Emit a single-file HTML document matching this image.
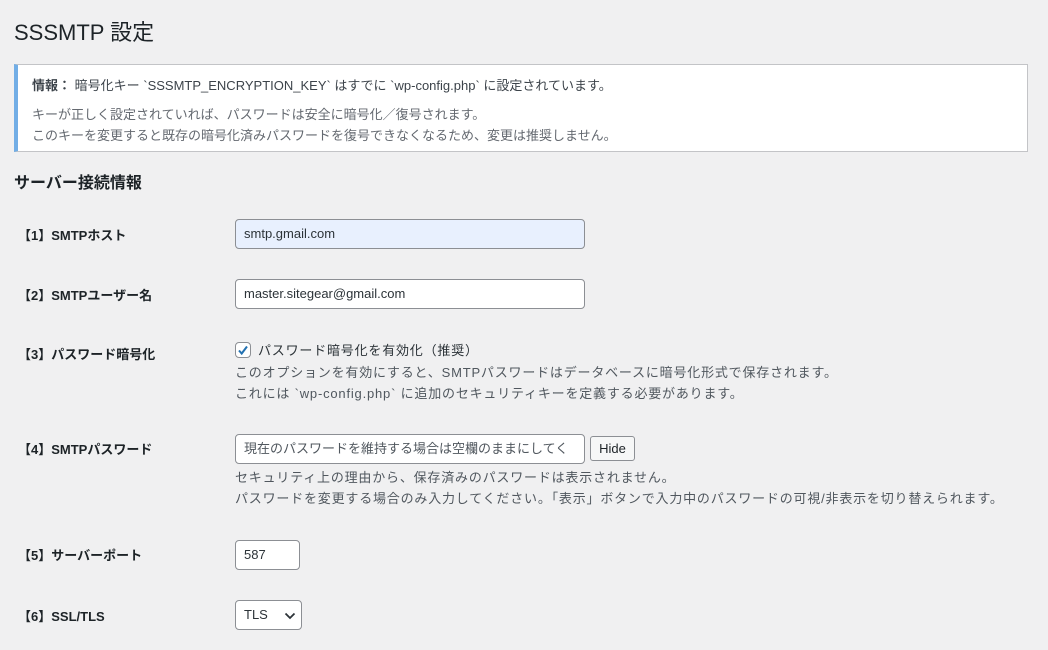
<!DOCTYPE html>
<html><head><meta charset="utf-8"><style>
body{margin:0;width:1048px;height:650px;background:#f0f0f1;font-family:"Liberation Sans","Noto Sans CJK JP",sans-serif;color:#1d2327;font-size:13px;position:relative;overflow:hidden}
.a{position:absolute;white-space:nowrap}
.lbl{font-weight:bold;font-size:13px;left:18px}
.inp{position:absolute;box-sizing:border-box;background:#fff;border:1px solid #8c8f94;border-radius:4px;height:30px;padding:0 8px;line-height:28px;font-size:13px;color:#2c3338}
.d{color:#50575e;font-size:13px;line-height:21px}
.ls{letter-spacing:0.8px}
</style></head><body>
<div class="a" style="left:14px;top:15px;font-size:22px;color:#1d2327">SSSMTP 設定</div>
<div style="position:absolute;left:14px;top:64px;width:1014px;height:88px;box-sizing:border-box;background:#fff;border:1px solid #c3c4c7;border-left:4px solid #72aee6"></div>
<div class="a" style="left:32px;top:75px;color:#3c434a"><b>情報：</b> 暗号化キー `SSSMTP_ENCRYPTION_KEY` はすでに `wp-config.php` に設定されています。</div>
<div class="a d" style="left:32px;top:104px;color:#646970">キーが正しく設定されていれば、パスワードは安全に暗号化／復号されます。<br>このキーを変更すると既存の暗号化済みパスワードを復号できなくなるため、変更は推奨しません。</div>
<div class="a" style="left:14px;top:169px;font-size:16px;font-weight:bold">サーバー接続情報</div>

<div class="a lbl" style="top:225px">【1】SMTPホスト</div>
<div class="inp" style="left:235px;top:219px;width:350px;background:#e8f0fe">smtp.gmail.com</div>

<div class="a lbl" style="top:285px">【2】SMTPユーザー名</div>
<div class="inp" style="left:235px;top:279px;width:350px">master.sitegear@gmail.com</div>

<div class="a lbl" style="top:344px">【3】パスワード暗号化</div>
<div style="position:absolute;left:235px;top:342px;width:16px;height:16px;box-sizing:border-box;border:1px solid #8c8f94;border-radius:4px;background:#fff">
<svg width="14" height="14" viewBox="0 0 14 14" style="position:absolute;left:0;top:0"><path d="M3 7.5l2.7 3L11 3.5" stroke="#2271b1" stroke-width="2" fill="none"/></svg></div>
<div class="a ls" style="left:258px;top:340px;color:#2c3338">パスワード暗号化を有効化（推奨）</div>
<div class="a d ls" style="left:235px;top:362px">このオプションを有効にすると、SMTPパスワードはデータベースに暗号化形式で保存されます。<br>これには `wp-config.php` に追加のセキュリティキーを定義する必要があります。</div>

<div class="a lbl" style="top:439px">【4】SMTPパスワード</div>
<div class="inp" style="left:235px;top:434px;width:350px;color:#50575e;overflow:hidden">現在のパスワードを維持する場合は空欄のままにしてください</div>
<div style="position:absolute;left:590px;top:436px;width:45px;height:25px;box-sizing:border-box;border:1px solid #8c8f94;border-radius:3px;background:#f6f7f7;text-align:center;line-height:23px;font-size:13px">Hide</div>
<div class="a d ls" style="left:235px;top:467px">セキュリティ上の理由から、保存済みのパスワードは表示されません。<br>パスワードを変更する場合のみ入力してください。「表示」ボタンで入力中のパスワードの可視/非表示を切り替えられます。</div>

<div class="a lbl" style="top:545px">【5】サーバーポート</div>
<div class="inp" style="left:235px;top:540px;width:65px">587</div>

<div class="a lbl" style="top:606px">【6】SSL/TLS</div>
<div class="inp" style="left:235px;top:600px;width:67px">TLS
<svg width="12" height="8" viewBox="0 0 12 8" style="position:absolute;left:48px;top:11px"><path d="M1.5 1.5l4.5 4.5 4.5-4.5" stroke="#2c3338" stroke-width="1.8" fill="none"/></svg></div>
</body></html>
